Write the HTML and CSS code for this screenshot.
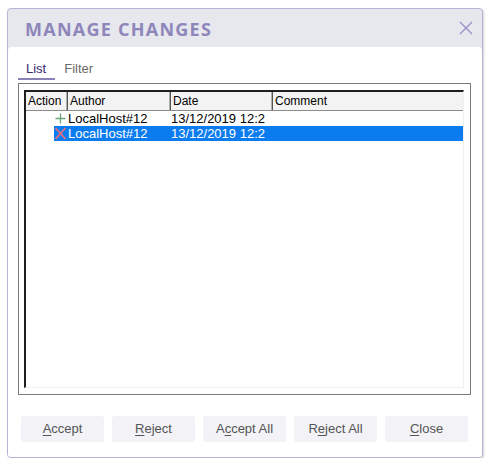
FILE: index.html
```html
<!DOCTYPE html>
<html>
<head>
<meta charset="utf-8">
<link rel="stylesheet" href="styles.css">
</head>
<body>
<div class="dialog">
  <div class="titlebar">
    <div class="title">MANAGE CHANGES</div>
    <svg class="close" width="14" height="14" viewBox="0 0 14 14"><path d="M1 1L13 13M13 1L1 13" stroke="#9a92c4" stroke-width="1.4" fill="none"/></svg>
  </div>
  <div class="content">
    <div class="tabs">
      <div class="tab active">List</div>
      <div class="tab">Filter</div>
    </div>
    <div class="listbox">
      <div class="listview">
        <div class="header">
          <div class="hcell c-action">Action</div>
          <div class="hcell c-author">Author</div>
          <div class="hcell c-date">Date</div>
          <div class="hcell c-comment">Comment</div>
        </div>
        <div class="row">
          <div class="indent"></div>
          <div class="entry">
            <svg class="icon" width="13" height="15" viewBox="0 0 13 15"><path d="M6.5 2.5V12.5M1.5 7.5H11.5" stroke="#6aa67a" stroke-width="1.3" fill="none"/></svg>
            <div class="cell author">LocalHost#12</div>
            <div class="cell date">13/12/2019 12:2</div>
            <div class="cell comment"></div>
          </div>
        </div>
        <div class="row">
          <div class="indent"></div>
          <div class="entry selected">
            <svg class="icon" width="13" height="15" viewBox="0 0 13 15"><path d="M1.5 2L11.5 13M11.5 2L1.5 13" stroke="#e8707c" stroke-width="1.8" fill="none"/></svg>
            <div class="cell author">LocalHost#12</div>
            <div class="cell date">13/12/2019 12:2</div>
            <div class="cell comment"></div>
          </div>
        </div>
      </div>
    </div>
    <div class="buttons">
      <div class="btn"><u>A</u>ccept</div>
      <div class="btn"><u>R</u>eject</div>
      <div class="btn">A<u>c</u>cept All</div>
      <div class="btn">R<u>e</u>ject All</div>
      <div class="btn"><u>C</u>lose</div>
    </div>
  </div>
</div>
</body>
</html>
```

FILE: styles.css
```css
*, *::before, *::after {
  box-sizing: border-box;
}
html, body {
  margin: 0;
  background: #ffffff;
}
body {
  padding: 8px 0 0 7px;
  font-family: "Liberation Sans", Arial, sans-serif;
}
.dialog {
  width: 476px;
  height: 450px;
  border: 1px solid #b8b3d6;
  border-radius: 4px;
  box-shadow: 1px 1px 2px rgba(0, 0, 0, 0.18);
  background: #e7e7ee;
  display: flex;
  flex-direction: column;
}
.titlebar {
  height: 38px;
  flex: none;
  display: flex;
  align-items: center;
  justify-content: space-between;
  padding: 0 9px 0 17px;
}
.title {
  font-family: "Open Sans", sans-serif;
  font-weight: 700;
  font-size: 18px;
  color: #8e86ba;
  letter-spacing: 1.25px;
  padding-top: 2px;
}
.close {
  display: block;
}
.content {
  flex: 1;
  background: #ffffff;
  border-radius: 4px 4px 3px 3px;
  padding: 14px 11px 0 10px;
}
.tabs {
  display: flex;
  gap: 1px;
}
.tab {
  font-size: 13px;
  line-height: 16px;
  padding: 0 9px 1px 8px;
  border-bottom: 2px solid transparent;
  color: #6b6b6b;
}
.tab.active {
  color: #3a2a70;
  border-bottom-color: #8a82b6;
}
.listbox {
  margin-top: 3px;
  height: 312px;
  border: 1px solid #7c7c7c;
  padding: 6px 6px 7px 5px;
}
.listview {
  height: 298px;
  border-top: 2px solid #1e1e1e;
  border-left: 2px solid #1e1e1e;
  border-right: 1px solid #f0f0f0;
  border-bottom: 1px solid #f0f0f0;
  background: #ffffff;
}
.header {
  display: flex;
  height: 19px;
  background: #f3f3f3;
  border-bottom: 1px solid #8c8c8c;
  font-size: 12px;
  line-height: 18px;
  color: #000;
}
.hcell {
  padding-left: 2px;
  white-space: nowrap;
}
.c-action { width: 41px; }
.c-author { width: 103px; border-left: 1px solid #555; }
.c-date { width: 102px; border-left: 1px solid #555; }
.c-comment { flex: 1; border-left: 1px solid #555; }
.c-action, .c-author, .c-date { box-shadow: inset -1px 0 0 #b0b0b0; }
.row {
  display: flex;
  height: 15px;
  font-size: 13px;
  line-height: 15px;
  color: #000;
}
.indent {
  width: 28px;
}
.entry {
  flex: 1;
  display: flex;
}
.entry.selected {
  background: #0b7bf0;
  color: #ffffff;
}
.icon {
  display: block;
  flex: none;
}
.cell {
  white-space: nowrap;
}
.author { width: 103px; padding-left: 1px; }
.date { width: 102px; padding-left: 1px; }
.comment { flex: 1; }
.buttons {
  margin-top: 21px;
  padding: 0 3px;
  display: flex;
  gap: 8px;
}
.btn {
  width: 83px;
  height: 26px;
  border-radius: 3px;
  background: #f2f2f7;
  color: #555555;
  font-size: 13px;
  line-height: 26px;
  text-align: center;
}
.btn u {
  text-decoration-thickness: 1px;
  text-underline-offset: 2px;
}
```
